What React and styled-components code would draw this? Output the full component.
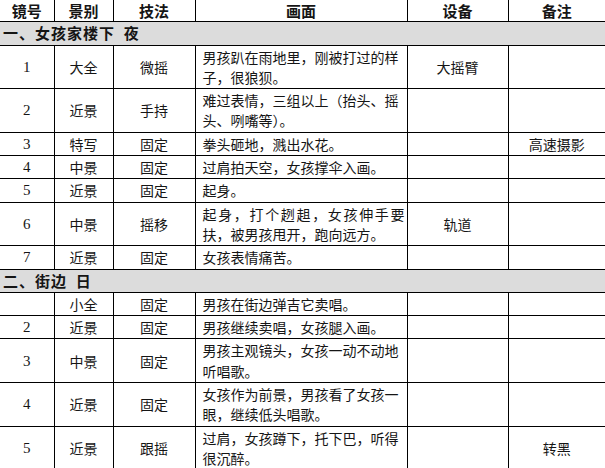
import React from 'react';
import styled, { createGlobalStyle } from 'styled-components';

const GlobalStyle = createGlobalStyle`
  body {
    margin: 0;
    background: #fff;
  }
`

const Sheet = styled.table`
  width: 605px;
  border-collapse: collapse;
  table-layout: fixed;
  font-family: "Noto Sans CJK SC", sans-serif;
  font-size: 14px;
  line-height: 20.3px;
  color: #151515;
`

const Head = styled.th`
  padding: 1px 0 0;
  font-weight: 700;
  font-size: 15px;
  text-align: center;
  border-bottom: 1px solid #000;
  border-left: 1px solid #000;

  &:first-child {
    border-left: none;
  }
`

const Section = styled.td`
  padding: 1px 3px;
  background: #dcdcdc;
  font-weight: 700;
  font-size: 15px;
  letter-spacing: 1px;
  white-space: pre;
  border-top: 1px solid #000;
  border-bottom: 1px solid #000;
`

const Cell = styled.td`
  padding: 1px ${({ $left }) => $left ? '2px 1px 7px' : '0'};
  text-align: ${({ $left }) => $left ? 'left' : 'center'};
  vertical-align: middle;
  font-family: ${({ $digit }) => $digit
    ? '"Liberation Serif", "Noto Sans CJK SC", serif'
    : '"Noto Sans CJK SC", sans-serif'};
  font-size: ${({ $digit }) => $digit ? '15px' : '14px'};
  border: 1px solid #000;

  &:first-child {
    border-left: none;
  }
  &:last-child {
    border-right: none;
  }
`

const Line = styled.span`
  display: block;
  white-space: nowrap;
  text-align: ${({ $spread }) => $spread ? 'justify' : 'left'};
  text-align-last: ${({ $spread }) => $spread ? 'justify' : 'left'};
`

const columns = [
  { title: '镜号', width: 54 },
  { title: '景别', width: 59 },
  { title: '技法', width: 82 },
  { title: '画面', width: 212 },
  { title: '设备', width: 101 },
  { title: '备注', width: 97 },
]

const sections = [
  {
    title: '一、女孩家楼下  夜',
    shots: [
      { no: '1', size: '大全', move: '微摇', lines: ['男孩趴在雨地里，刚被打过的样', '子，很狼狈。'], gear: '大摇臂' },
      { no: '2', size: '近景', move: '手持', lines: ['难过表情，三组以上（抬头、摇', '头、咧嘴等）。'] },
      { no: '3', size: '特写', move: '固定', lines: ['拳头砸地，溅出水花。'], note: '高速摄影' },
      { no: '4', size: '中景', move: '固定', lines: ['过肩拍天空，女孩撑伞入画。'] },
      { no: '5', size: '近景', move: '固定', lines: ['起身。'] },
      { no: '6', size: '中景', move: '摇移', lines: ['起身，打个趔趄，女孩伸手要', '扶，被男孩甩开，跑向远方。'], spread: true, gear: '轨道' },
      { no: '7', size: '近景', move: '固定', lines: ['女孩表情痛苦。'] },
    ],
  },
  {
    title: '二、街边  日',
    shots: [
      { no: '', size: '小全', move: '固定', lines: ['男孩在街边弹吉它卖唱。'] },
      { no: '2', size: '近景', move: '固定', lines: ['男孩继续卖唱，女孩腿入画。'] },
      { no: '3', size: '中景', move: '固定', lines: ['男孩主观镜头，女孩一动不动地', '听唱歌。'] },
      { no: '4', size: '近景', move: '固定', lines: ['女孩作为前景，男孩看了女孩一', '眼，继续低头唱歌。'] },
      { no: '5', size: '近景', move: '跟摇', lines: ['过肩，女孩蹲下，托下巴，听得', '很沉醉。'], note: '转黑' },
    ],
  },
]

function ShotRow ({ shot }) {
  return (
    <tr>
      <Cell $digit>{shot.no}</Cell>
      <Cell>{shot.size}</Cell>
      <Cell>{shot.move}</Cell>
      <Cell $left>
        {shot.lines.map((line, i) => (
          <Line key={i} $spread={shot.spread && i === 0}>{line}</Line>
        ))}
      </Cell>
      <Cell>{shot.gear}</Cell>
      <Cell>{shot.note}</Cell>
    </tr>
  )
}

function App () {
  return (
    <>
      <GlobalStyle />
      <Sheet>
        <colgroup>
          {columns.map(col => <col key={col.title} style={{ width: col.width }} />)}
        </colgroup>
        <thead>
          <tr>
            {columns.map(col => <Head key={col.title}>{col.title}</Head>)}
          </tr>
        </thead>
        {sections.map(section => (
          <tbody key={section.title}>
            <tr>
              <Section colSpan={6}>{section.title}</Section>
            </tr>
            {section.shots.map((shot, i) => <ShotRow key={i} shot={shot} />)}
          </tbody>
        ))}
      </Sheet>
    </>
  )
}

export default App;
